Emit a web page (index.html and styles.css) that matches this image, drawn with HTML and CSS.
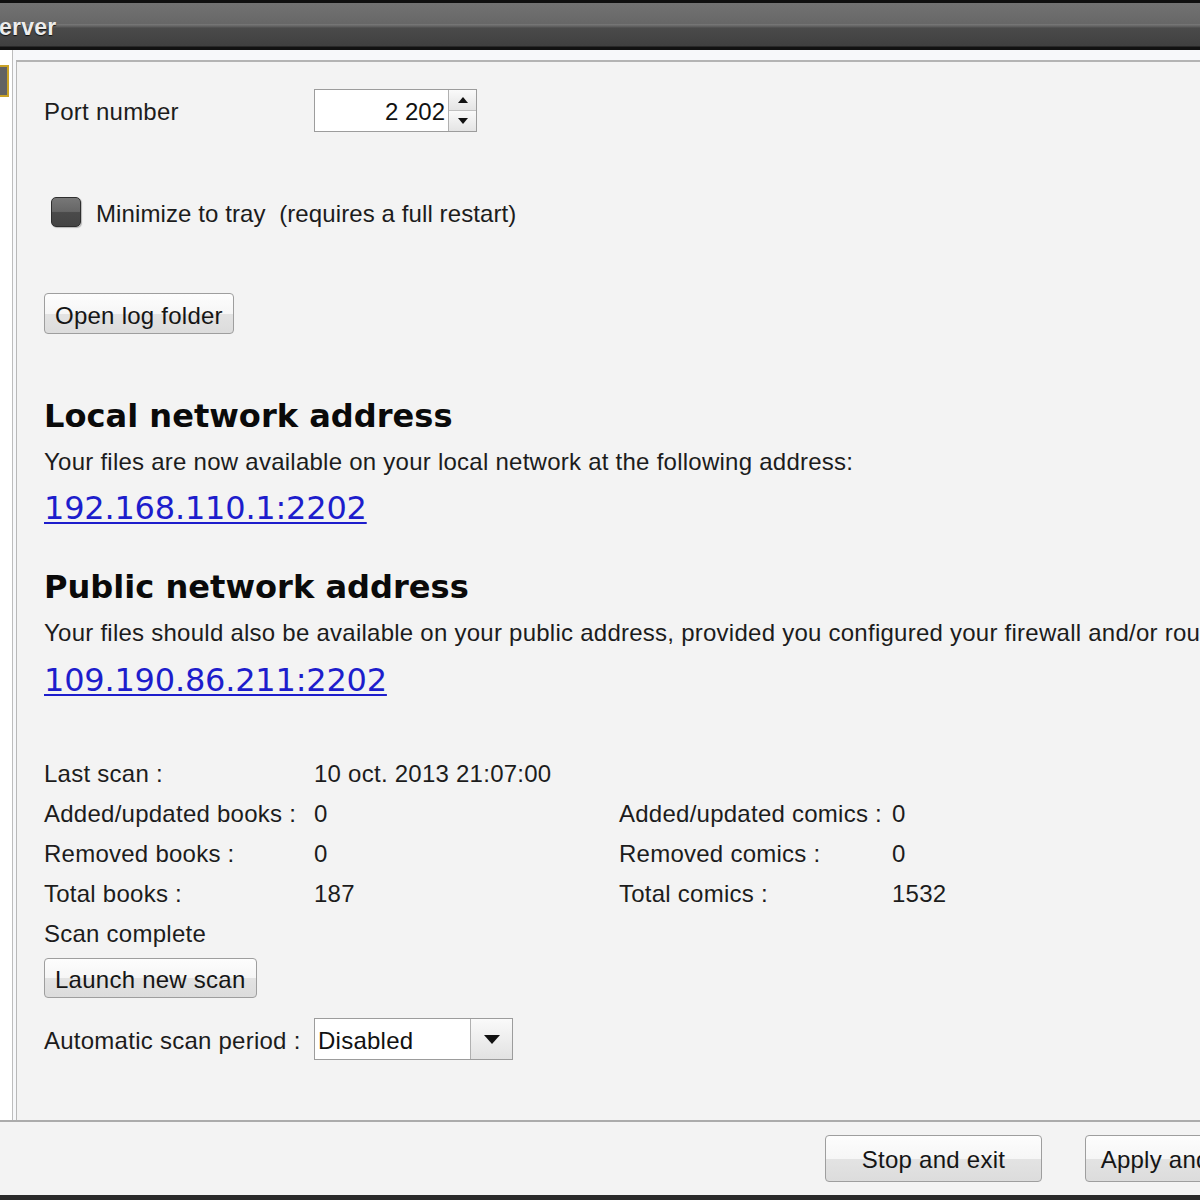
FILE: index.html
```html
<!DOCTYPE html>
<html>
<head>
<meta charset="utf-8">
<link rel="stylesheet" href="styles.css">
</head>
<body>
<div class="window">
  <div class="titlebar"><span class="title">erver</span></div>
  <div class="main">
    <div class="sidebar"><div class="side-item"></div></div>
    <div class="panel-wrap">
      <div class="panel">
        <div class="row port-row">
          <span class="label">Port number</span>
          <div class="spinner">
            <div class="spin-field">2 202</div>
            <div class="spin-btns">
              <div class="spin-btn"><span class="tri-up"></span></div>
              <div class="spin-btn"><span class="tri-down"></span></div>
            </div>
          </div>
        </div>
        <div class="row check-row">
          <span class="checkbox"></span>
          <span class="check-label">Minimize to tray&nbsp; (requires a full restart)</span>
        </div>
        <div class="btn-row first-btn"><button class="btn">Open log folder</button></div>

        <h2 class="heading h-local">Local network address</h2>
        <p class="para">Your files are now available on your local network at the following address:</p>
        <a class="addr" href="#">192.168.110.1:2202</a>

        <h2 class="heading h-public">Public network address</h2>
        <p class="para">Your files should also be available on your public address, provided you configured your firewall and/or router correctly:</p>
        <a class="addr addr-public" href="#">109.190.86.211:2202</a>

        <div class="stats">
          <span>Last scan :</span><span>10 oct. 2013 21:07:00</span><span></span><span></span>
          <span>Added/updated books :</span><span>0</span><span>Added/updated comics :</span><span>0</span>
          <span>Removed books :</span><span>0</span><span>Removed comics :</span><span>0</span>
          <span>Total books :</span><span>187</span><span>Total comics :</span><span>1532</span>
          <span>Scan complete</span><span></span><span></span><span></span>
        </div>
        <div class="btn-row scan-btn"><button class="btn">Launch new scan</button></div>
        <div class="row combo-row">
          <span class="label">Automatic scan period :</span>
          <div class="combo">
            <div class="combo-field">Disabled</div>
            <div class="combo-arrow"><span class="tri-down big"></span></div>
          </div>
        </div>
      </div>
    </div>
  </div>
  <div class="bottombar">
    <button class="btn big-btn">Stop and exit</button>
    <button class="btn big-btn">Apply and restart</button>
  </div>
</div>
</body>
</html>
```
FILE: styles.css
```css
html, body {
  margin: 0;
  padding: 0;
  width: 1200px;
  height: 1200px;
  overflow: hidden;
  background: #f3f3f3;
}
.window {
  width: 1347px;
  height: 1200px;
  display: flex;
  flex-direction: column;
  background: #f3f3f3;
  font-family: "Liberation Sans", Arial, sans-serif;
  font-size: 24px;
  letter-spacing: 0.25px;
  color: #1c1c1c;
}
.titlebar {
  height: 50px;
  flex: none;
  box-sizing: border-box;
  background: linear-gradient(to bottom,
    #101010 0px, #101010 3px,
    #727272 3px, #676767 24px,
    #7a7a7a 24px, #5a5a5a 27px,
    #4a4a4a 28px, #404040 46px,
    #121212 47px, #121212 50px);
  display: flex;
  align-items: center;
}
.title {
  font-weight: bold;
  font-size: 23px;
  color: #ececec;
  text-shadow: 0 1px 1px #111;
  margin-left: -1px;
  margin-top: 5px;
  letter-spacing: 0.2px;
}
.main {
  height: 1072px;
  flex: none;
  display: flex;
  border-bottom: 2px solid #ababab;
  box-sizing: border-box;
}
.sidebar {
  width: 13px;
  flex: none;
  background: #ffffff;
  border-right: 1px solid #bdbdbd;
  padding-top: 15px;
  box-sizing: border-box;
}
.side-item {
  width: 11px;
  height: 32px;
  margin-left: -2px;
  box-sizing: border-box;
  border: 2px solid #c9a227;
  background: #626262;
}
.panel-wrap {
  flex: 1;
  background: #f7f8fa;
  padding: 10px 0 0 3px;
  display: flex;
}
.panel {
  flex: 1;
  background: #f3f3f3;
  border-top: 2px solid #b3b3b3;
  border-left: 1px solid #b8b8b8;
  padding-left: 27px;
  display: flex;
  flex-direction: column;
  align-items: flex-start;
}
.row {
  display: flex;
  align-items: center;
}
.label {
  width: 270px;
  flex: none;
  padding-top: 3px;
}
.port-row {
  margin-top: 27px;
  height: 43px;
}
.spinner {
  display: flex;
  width: 163px;
  height: 43px;
  box-sizing: border-box;
  border: 1px solid #9c9c9c;
  background: #fff;
}
.spin-field {
  flex: 1;
  text-align: right;
  padding: 3px 3px 0 0;
  line-height: 38px;
  color: #111;
  letter-spacing: 0;
}
.spin-btns {
  width: 27px;
  border-left: 1px solid #b0b0b0;
  display: flex;
  flex-direction: column;
}
.spin-btn {
  flex: 1;
  display: flex;
  align-items: center;
  justify-content: center;
  background: linear-gradient(to bottom, #fafafa, #e4e4e4);
}
.spin-btn + .spin-btn {
  border-top: 1px solid #c0c0c0;
}
.tri-up {
  width: 0;
  height: 0;
  border-left: 5px solid transparent;
  border-right: 5px solid transparent;
  border-bottom: 6px solid #111;
}
.tri-down {
  width: 0;
  height: 0;
  border-left: 5px solid transparent;
  border-right: 5px solid transparent;
  border-top: 6px solid #111;
}
.tri-down.big {
  border-left-width: 8px;
  border-right-width: 8px;
  border-top-width: 9px;
}
.check-row {
  margin-top: 65px;
  height: 30px;
}
.checkbox {
  width: 30px;
  height: 30px;
  margin-left: 7px;
  box-sizing: border-box;
  border: 1px solid #2e2e2e;
  border-radius: 5px;
  background: linear-gradient(to bottom, #777 0%, #666 48%, #4a4a4a 52%, #444 100%);
  box-shadow: 1px 1px 1px rgba(0,0,0,0.25);
}
.check-label {
  margin-left: 15px;
  padding-top: 3px;
  letter-spacing: 0.1px;
}
.btn-row {
  display: flex;
}
.first-btn {
  margin-top: 66px;
}
.btn {
  font-family: "Liberation Sans", Arial, sans-serif;
  font-size: 24px;
  letter-spacing: 0.25px;
  color: #151515;
  height: 41px;
  padding: 4px 10px 0 10px;
  border: 1px solid #9e9e9e;
  border-radius: 4px;
  background: linear-gradient(to bottom, #fdfdfd 0%, #f6f6f6 50%, #e3e3e3 51%, #dcdcdc 100%);
  cursor: default;
}
.heading {
  font-family: "DejaVu Sans", Verdana, sans-serif;
  font-weight: bold;
  font-size: 32.1px;
  color: #0a0a0a;
  margin: 0;
  box-sizing: border-box;
  line-height: 39px;
  height: 40px;
  letter-spacing: 0;
  padding-top: 1px;
}
.h-local {
  margin-top: 62px;
}
.h-public {
  margin-top: 37px;
}
.para {
  margin: 5px 0 0 0;
  box-sizing: border-box;
  line-height: 39px;
  height: 40px;
  padding-top: 1px;
  white-space: nowrap;
}
.addr {
  font-family: "DejaVu Sans", Verdana, sans-serif;
  font-size: 32px;
  color: #1d1dcc;
  text-decoration: underline;
  text-decoration-thickness: 2px;
  text-underline-offset: 3px;
  line-height: 44px;
  height: 44px;
  margin-top: 5px;
  letter-spacing: -0.2px;
}
.addr-public {
  margin-top: 6px;
}
.stats {
  margin-top: 52px;
  display: grid;
  grid-template-columns: 270px 305px 273px auto;
  grid-auto-rows: 40px;
  align-items: center;
}
.scan-btn {
  margin-top: 4px;
}
.scan-btn .btn {
  height: 40px;
}
.combo-row {
  margin-top: 20px;
  height: 42px;
}
.combo {
  display: flex;
  width: 199px;
  height: 42px;
  box-sizing: border-box;
  border: 1px solid #9c9c9c;
  background: #fff;
}
.combo-field {
  flex: 1;
  padding: 3px 0 0 3px;
  line-height: 37px;
  color: #111;
}
.combo-arrow {
  width: 41px;
  border-left: 1px solid #b0b0b0;
  display: flex;
  align-items: center;
  justify-content: center;
  background: linear-gradient(to bottom, #fafafa, #e2e2e2);
}
.bottombar {
  flex: 1;
  display: flex;
  justify-content: flex-end;
  align-items: flex-start;
  gap: 43px;
  padding: 13px 45px 0 0;
  border-bottom: 5px solid #2a2a2a;
  box-sizing: border-box;
}
.big-btn {
  width: 217px;
  height: 47px;
  padding: 3px 0 0 0;
}
```
